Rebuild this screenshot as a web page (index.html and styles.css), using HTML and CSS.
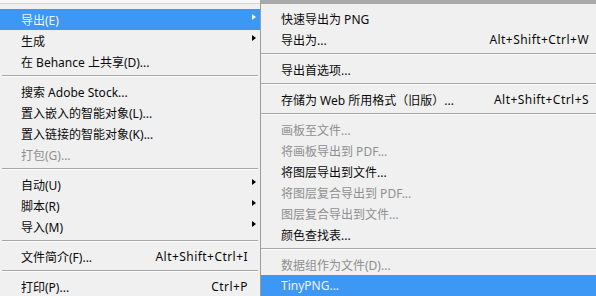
FILE: index.html
```html
<!DOCTYPE html>
<html lang="zh-CN">
<head>
<meta charset="utf-8">
<link rel="stylesheet" href="styles.css">
</head>
<body>
<div class="screen">
  <div class="menu main">
    <div class="topline"></div>
    <div class="item active"><span class="label">导出(E)</span><span class="arrow"></span></div>
    <div class="item"><span class="label">生成</span><span class="arrow"></span></div>
    <div class="item"><span class="label">在 Behance 上共享(D)...</span></div>
    <div class="sep"></div>
    <div class="item"><span class="label">搜索 Adobe Stock...</span></div>
    <div class="item"><span class="label">置入嵌入的智能对象(L)...</span></div>
    <div class="item"><span class="label">置入链接的智能对象(K)...</span></div>
    <div class="item disabled"><span class="label">打包(G)...</span></div>
    <div class="sep"></div>
    <div class="item"><span class="label">自动(U)</span><span class="arrow"></span></div>
    <div class="item"><span class="label">脚本(R)</span><span class="arrow"></span></div>
    <div class="item"><span class="label">导入(M)</span><span class="arrow"></span></div>
    <div class="sep"></div>
    <div class="item"><span class="label">文件简介(F)...</span><span class="shortcut">Alt+Shift+Ctrl+I</span></div>
    <div class="sep"></div>
    <div class="item"><span class="label">打印(P)...</span><span class="shortcut">Ctrl+P</span></div>
  </div>
  <div class="menu sub">
    <div class="item"><span class="label">快速导出为 PNG</span></div>
    <div class="item"><span class="label">导出为...</span><span class="shortcut">Alt+Shift+Ctrl+W</span></div>
    <div class="sep"></div>
    <div class="item"><span class="label">导出首选项...</span></div>
    <div class="sep"></div>
    <div class="item"><span class="label">存储为 Web 所用格式（旧版）...</span><span class="shortcut">Alt+Shift+Ctrl+S</span></div>
    <div class="sep"></div>
    <div class="item disabled"><span class="label">画板至文件...</span></div>
    <div class="item disabled"><span class="label">将画板导出到 PDF...</span></div>
    <div class="item"><span class="label">将图层导出到文件...</span></div>
    <div class="item disabled"><span class="label">将图层复合导出到 PDF...</span></div>
    <div class="item disabled"><span class="label">图层复合导出到文件...</span></div>
    <div class="item"><span class="label">颜色查找表...</span></div>
    <div class="sep"></div>
    <div class="item disabled"><span class="label">数据组作为文件(D)...</span></div>
    <div class="item active"><span class="label">TinyPNG...</span></div>
  </div>
</div>
</body>
</html>
```
FILE: styles.css
```css
html, body {
  margin: 0;
  padding: 0;
  background: #f0f0f0;
}
.screen {
  display: flex;
  width: 596px;
  height: 296px;
  overflow: hidden;
  font-family: "Noto Sans", "Noto Sans CJK SC", sans-serif;
  font-size: 12px;
  color: #0a0a0a;
}
.menu {
  display: flex;
  flex-direction: column;
  background: #f0f0f0;
}
.main {
  width: 260px;
  flex: none;
}
.topline {
  height: 9px;
  flex: none;
  border-top: 3px solid #f8f8f8;
  box-sizing: border-box;
  background: linear-gradient(#d2d2d2, #d2d2d2) 0 0 / 100% 1px no-repeat;
}
.sub {
  flex: 1;
  border-top: 4px solid #a9a9a9;
  border-left: 1px solid #9c9c9c;
  padding-top: 4px;
}
.item {
  display: flex;
  align-items: center;
  height: 21px;
  flex: none;
  white-space: nowrap;
}
.main .item {
  padding: 0 4px 0 21px;
}
.sub .item {
  padding: 0 7px 0 20px;
}
.item.active {
  background: #3d97f4;
  color: #eef6ff;
}
.item.disabled {
  color: #8f8f8f;
}
.shortcut {
  margin-left: auto;
  letter-spacing: 0.45px;
}
.main .shortcut {
  margin-right: 8px;
}
.arrow {
  margin-left: auto;
  align-self: flex-start;
  margin-top: 5px;
  width: 0;
  height: 0;
  border-style: solid;
  border-width: 3.5px 0 3.5px 4px;
  border-color: transparent transparent transparent #000;
}
.item.active .arrow {
  border-left-color: #eef6ff;
}
.sep {
  height: 9px;
  flex: none;
  box-sizing: border-box;
  padding-top: 3px;
}
.sep::before {
  content: "";
  display: block;
  height: 1px;
  background: #a6a6a6;
  border-bottom: 1px solid #fbfbfb;
}
.main .sep {
  margin: 0 2px;
}
```
